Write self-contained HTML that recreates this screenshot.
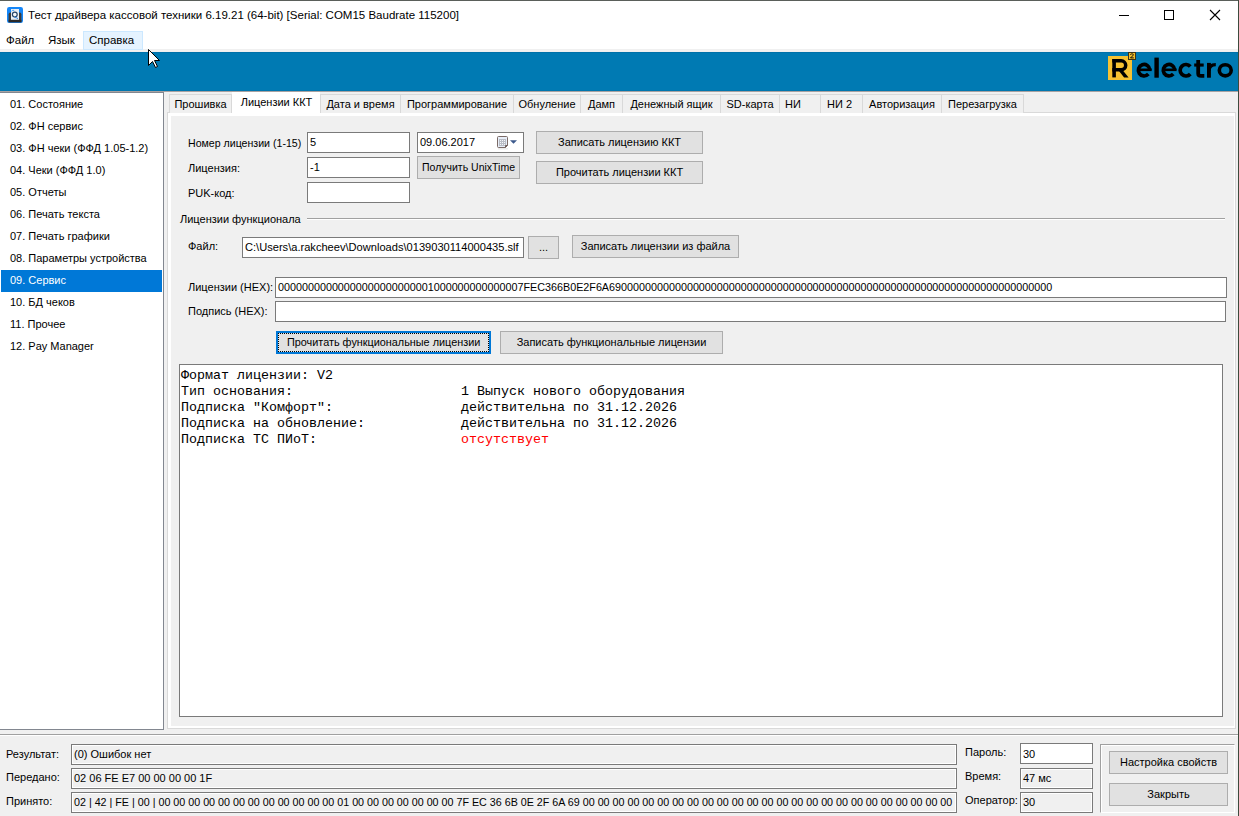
<!DOCTYPE html>
<html><head><meta charset="utf-8">
<style>
*{margin:0;padding:0;box-sizing:border-box}
html,body{width:1239px;height:816px;overflow:hidden;background:#F0F0F0;font-family:"Liberation Sans",sans-serif;font-size:11px;color:#000}
.a{position:absolute}
.t{position:absolute;white-space:pre;line-height:13px;margin-top:-1px}
.tb{position:absolute;background:#fff;border:1px solid #7A7A7A}
.ro{position:absolute;background:#F0F0F0;border:1px solid #7A7A7A;box-shadow:inset 0 0 0 1px #fff}
.btn{position:absolute;background:#E1E1E1;border:1px solid #ADADAD;white-space:pre;text-align:center}
.tab{position:absolute;background:#F0F0F0;border:1px solid #D9D9D9;border-bottom:none;white-space:pre}
.mono{position:absolute;font-family:"Liberation Mono",monospace;font-size:13.33px;line-height:16px;white-space:pre}
</style></head><body>
<div class="a" style="left:0px;top:0px;width:1239px;height:51px;background:#fff"></div>
<div class="a" style="left:0px;top:0px;width:1239px;height:1px;background:#5a5f5a"></div>
<svg class="a" style="left:7px;top:7px" width="16" height="16" viewBox="0 0 16 16">
<rect x="0" y="0" width="16" height="16" rx="2.2" fill="#1486F8"/>
<path d="M1.6 7.2Q1.6 5.6 3.2 5.6H12.8Q14.4 5.6 14.4 7.2V15.2H1.6Z" fill="#3c3c3c"/>
<rect x="4" y="2" width="8" height="11" fill="#E9EEF4"/>
<path d="M4.6 4.2Q5.6 2.8 7.2 3.4" fill="none" stroke="#4A9EF0" stroke-width="1"/>
<circle cx="7.8" cy="7.6" r="2.4" fill="#F4F7FA" stroke="#27466A" stroke-width="1.2"/>
<path d="M7.4 10.3Q9.4 10.6 11 11.6" fill="none" stroke="#2F86E6" stroke-width="1"/>
<rect x="1.6" y="12.8" width="12.8" height="2.4" fill="#2a2a2a"/>
</svg>
<div class="t" style="left:28px;top:9px;font-size:11.5px;line-height:15px">Тест драйвера кассовой техники 6.19.21 (64-bit) [Serial: COM15 Baudrate 115200]</div>
<div class="a" style="left:1119px;top:15px;width:10px;height:1px;background:#000"></div>
<div class="a" style="left:1164px;top:10px;width:10px;height:10px;border:1px solid #000"></div>
<svg class="a" style="left:1209px;top:9px" width="12" height="12" viewBox="0 0 12 12"><path d="M1 1L11 11M11 1L1 11" stroke="#000" stroke-width="1.1"/></svg>
<div class="a" style="left:0px;top:49px;width:1238px;height:1px;background:#F0F0F0"></div>
<div class="a" style="left:0px;top:50px;width:1238px;height:1px;background:#F3F2F0"></div>
<div class="a" style="left:83px;top:31px;width:60px;height:19px;background:#E5F3FF;border:1px solid #CCE8FF"></div>
<div class="t" style="left:6px;top:34px;font-size:11.5px;line-height:14px">Файл</div>
<div class="t" style="left:48px;top:34px;font-size:11.5px;line-height:14px">Язык</div>
<div class="t" style="left:89px;top:34px;font-size:11.5px;line-height:14px">Справка</div>
<div class="a" style="left:0px;top:52px;width:1238px;height:39px;background:#007AB3"></div>
<div class="a" style="left:0px;top:52px;width:1238px;height:1px;background:#0071A9"></div>
<div class="a" style="left:0px;top:90px;width:1238px;height:1px;background:#0076AE"></div>
<div class="a" style="left:0px;top:91px;width:1238px;height:1px;background:#A8A2A2"></div>
<svg class="a" style="left:1100px;top:50px" width="139" height="40" viewBox="1100 50 139 40"><rect x="1108" y="56" width="24" height="24" fill="#F7C232"/><path d="M1114.1 59V77.4" stroke="#000" stroke-width="3.6"/><path d="M1112.3 60.8H1121.2A4.5 4.5 0 0 1 1121.2 69.8H1112.3" fill="none" stroke="#000" stroke-width="3.5"/><path d="M1118.6 70.4H1122.9L1128.6 77.4H1124.1Z" fill="#000"/><rect x="1128.5" y="52.5" width="7" height="7" fill="#F2BE2A" stroke="#3a3218" stroke-width="1"/><path d="M1130.4 54.9C1130.4 53.5 1133.6 53.5 1133.4 55C1133.3 55.8 1131.4 56.5 1130.5 57.9H1133.8" fill="none" stroke="#111" stroke-width="1"/><path d="M1138.20 69.80H1151.70" stroke="#000" stroke-width="2.6"/><path d="M1149.85 69.85A5.75 5.75 0 1 0 1148.37 74.10" fill="none" stroke="#000" stroke-width="3.7"/><rect x="1154.4" y="57.6" width="4.4" height="20.1" fill="#000"/><path d="M1163.10 69.80H1176.60" stroke="#000" stroke-width="2.6"/><path d="M1174.75 69.85A5.75 5.75 0 1 0 1173.27 74.10" fill="none" stroke="#000" stroke-width="3.7"/><path d="M1190.30 66.55A5.75 5.75 0 1 0 1190.30 73.95" fill="none" stroke="#000" stroke-width="3.7"/><path d="M1198.2 60V73.4Q1198.2 75.9 1201 75.9H1204.3" fill="none" stroke="#000" stroke-width="3.8"/><rect x="1194.2" y="63.5" width="9.5" height="3.1" fill="#000"/><rect x="1207" y="62.9" width="3.9" height="14.8" fill="#000"/><path d="M1208.9 71Q1208.9 64.6 1215.8 64.6" fill="none" stroke="#000" stroke-width="3.4"/><ellipse cx="1225.25" cy="70.3" rx="5.95" ry="5.6" fill="none" stroke="#000" stroke-width="3.6"/></svg>
<div class="a" style="left:1238px;top:0px;width:1px;height:816px;background:#3d4b3d"></div>
<div class="a" style="left:-1px;top:92px;width:165px;height:638px;background:#fff;border:1px solid #828790"></div>
<div class="t" style="left:10px;top:99px;">01. Состояние</div>
<div class="t" style="left:10px;top:121px;">02. ФН сервис</div>
<div class="t" style="left:10px;top:143px;">03. ФН чеки (ФФД 1.05-1.2)</div>
<div class="t" style="left:10px;top:165px;">04. Чеки (ФФД 1.0)</div>
<div class="t" style="left:10px;top:187px;">05. Отчеты</div>
<div class="t" style="left:10px;top:209px;">06. Печать текста</div>
<div class="t" style="left:10px;top:231px;">07. Печать графики</div>
<div class="t" style="left:10px;top:253px;">08. Параметры устройства</div>
<div class="a" style="left:1px;top:270px;width:161px;height:22px;background:#0078D7"></div>
<div class="t" style="left:10px;top:275px;color:#fff">09. Сервис</div>
<div class="t" style="left:10px;top:297px;">10. БД чеков</div>
<div class="t" style="left:10px;top:319px;">11. Прочее</div>
<div class="t" style="left:10px;top:341px;">12. Pay Manager</div>
<div class="a" style="left:164px;top:92px;width:1074px;height:642px;background:#F0F0F0"></div>
<div class="a" style="left:167px;top:112px;width:1069px;height:617px;background:#fff;border:1px solid #D9D9D9"></div>
<div class="a" style="left:171px;top:116px;width:1063px;height:610px;background:#F0F0F0"></div>
<div class="tab" style="left:169px;top:94px;width:63px;height:19px"></div>
<div class="t" style="left:169px;top:99px;width:63px;text-align:center">Прошивка</div>
<div class="tab" style="left:320px;top:94px;width:81px;height:19px"></div>
<div class="t" style="left:320px;top:99px;width:81px;text-align:center">Дата и время</div>
<div class="tab" style="left:400px;top:94px;width:114px;height:19px"></div>
<div class="t" style="left:400px;top:99px;width:114px;text-align:center">Программирование</div>
<div class="tab" style="left:513px;top:94px;width:68px;height:19px"></div>
<div class="t" style="left:513px;top:99px;width:68px;text-align:center">Обнуление</div>
<div class="tab" style="left:580px;top:94px;width:43px;height:19px"></div>
<div class="t" style="left:580px;top:99px;width:43px;text-align:center">Дамп</div>
<div class="tab" style="left:622px;top:94px;width:99px;height:19px"></div>
<div class="t" style="left:622px;top:99px;width:99px;text-align:center">Денежный ящик</div>
<div class="tab" style="left:720px;top:94px;width:60px;height:19px"></div>
<div class="t" style="left:720px;top:99px;width:60px;text-align:center">SD-карта</div>
<div class="tab" style="left:779px;top:94px;width:42px;height:19px"></div>
<div class="t" style="left:785px;top:99px;">НИ</div>
<div class="tab" style="left:820px;top:94px;width:43px;height:19px"></div>
<div class="t" style="left:827px;top:99px;">НИ 2</div>
<div class="tab" style="left:862px;top:94px;width:80px;height:19px"></div>
<div class="t" style="left:862px;top:99px;width:80px;text-align:center">Авторизация</div>
<div class="tab" style="left:941px;top:94px;width:83px;height:19px"></div>
<div class="t" style="left:941px;top:99px;width:83px;text-align:center">Перезагрузка</div>
<div class="a" style="left:232px;top:92px;width:88px;height:22px;background:#fff"></div>
<div class="t" style="left:232px;top:97px;width:89px;text-align:center">Лицензии ККТ</div>
<div class="t" style="left:188px;top:138px;font-size:10.6px">Номер лицензии (1-15)</div>
<div class="t" style="left:188px;top:163px;">Лицензия:</div>
<div class="t" style="left:188px;top:188px;">PUK-код:</div>
<div class="a" style="left:307px;top:132px;width:103px;height:21px;background:#fff;border:1px solid #7A7A7A"></div>
<div class="t" style="left:310px;top:137px;">5</div>
<div class="a" style="left:307px;top:157px;width:103px;height:21px;background:#fff;border:1px solid #7A7A7A"></div>
<div class="t" style="left:310px;top:162px;">-1</div>
<div class="a" style="left:307px;top:182px;width:103px;height:21px;background:#fff;border:1px solid #7A7A7A"></div>
<div class="a" style="left:417px;top:132px;width:107px;height:21px;background:#fff;border:1px solid #7A7A7A"></div>
<div class="t" style="left:420px;top:137px;">09.06.2017</div>
<svg class="a" style="left:496px;top:135px" width="24" height="15" viewBox="0 0 24 15">
<rect x="2" y="13" width="10" height="1.5" fill="#000" opacity="0.08"/>
<path d="M2.5 1.5H10.5Q11.5 1.5 11.5 2.5V10.5L9.5 12.5H2.5Q1.5 12.5 1.5 11.5V2.5Q1.5 1.5 2.5 1.5Z" fill="#E8EEF8" stroke="#7A6A66" stroke-width="1"/>
<rect x="3" y="4" width="7" height="7" fill="#B9BDC6"/><rect x="4" y="5" width="1" height="1" fill="#F4F6FA"/><rect x="4" y="7" width="1" height="1" fill="#F4F6FA"/><rect x="4" y="9" width="1" height="1" fill="#F4F6FA"/><rect x="6" y="5" width="1" height="1" fill="#F4F6FA"/><rect x="6" y="7" width="1" height="1" fill="#F4F6FA"/><rect x="6" y="9" width="1" height="1" fill="#F4F6FA"/><rect x="8" y="5" width="1" height="1" fill="#F4F6FA"/><rect x="8" y="7" width="1" height="1" fill="#F4F6FA"/><rect x="8" y="9" width="1" height="1" fill="#F4F6FA"/>
<path d="M9.5 12.5V10.5H11.5" fill="none" stroke="#6A5A56" stroke-width="1"/>
<path d="M14 5.2h7l-3.5 3.6z" fill="#3C5A8C"/>
</svg>
<div class="btn" style="left:536px;top:131px;width:167px;height:23px;line-height:13px;padding-top:4px;">Записать лицензию ККТ</div>
<div class="btn" style="left:536px;top:161px;width:167px;height:23px;line-height:13px;padding-top:4px;">Прочитать лицензии ККТ</div>
<div class="btn" style="left:417px;top:156px;width:103px;height:23px;line-height:13px;padding-top:4px;font-size:10.5px">Получить UnixTime</div>
<div class="t" style="left:180px;top:214px;">Лицензии функционала</div>
<div class="a" style="left:307px;top:218px;width:918px;height:1px;background:#A0A0A0"></div>
<div class="a" style="left:307px;top:219px;width:918px;height:1px;background:#FFFFFF"></div>
<div class="t" style="left:188px;top:241px;">Файл:</div>
<div class="a" style="left:242px;top:237px;width:282px;height:21px;background:#fff;border:1px solid #7A7A7A"></div>
<div class="t" style="left:245px;top:242px;font-size:11.1px">C:\Users\a.rakcheev\Downloads\0139030114000435.slf</div>
<div class="btn" style="left:528px;top:236px;width:31px;height:23px;line-height:13px;padding-top:4px;">...</div>
<div class="btn" style="left:572px;top:235px;width:167px;height:23px;line-height:13px;padding-top:4px;">Записать лицензии из файла</div>
<div class="t" style="left:188px;top:282px;">Лицензии (HEX):</div>
<div class="t" style="left:188px;top:306px;">Подпись (HEX):</div>
<div class="a" style="left:275px;top:277px;width:952px;height:21px;background:#fff;border:1px solid #7A7A7A"></div>
<div class="t" style="left:278px;top:282px;font-size:10.77px">00000000000000000000000001000000000000007FEC366B0E2F6A69000000000000000000000000000000000000000000000000000000000000000000000000</div>
<div class="a" style="left:275px;top:301px;width:951px;height:21px;background:#fff;border:1px solid #7A7A7A"></div>
<div class="a" style="left:276px;top:331px;width:215px;height:23px;background:#E1E1E1;border:2px solid #0078D7"></div>
<div class="a" style="left:278px;top:333px;width:211px;height:1px;background:repeating-linear-gradient(90deg,#000 0 1px,transparent 1px 2px)"></div>
<div class="a" style="left:278px;top:351px;width:211px;height:1px;background:repeating-linear-gradient(90deg,#000 0 1px,transparent 1px 2px)"></div>
<div class="a" style="left:278px;top:333px;width:1px;height:19px;background:repeating-linear-gradient(180deg,#000 0 1px,transparent 1px 2px)"></div>
<div class="a" style="left:488px;top:333px;width:1px;height:19px;background:repeating-linear-gradient(180deg,#000 0 1px,transparent 1px 2px)"></div>
<div class="t" style="left:287px;top:337px;font-size:10.85px">Прочитать функциональные лицензии</div>
<div class="btn" style="left:500px;top:331px;width:223px;height:23px;line-height:13px;padding-top:4px;">Записать функциональные лицензии</div>
<div class="a" style="left:179px;top:364px;width:1044px;height:353px;background:#fff;border:1px solid #7A7A7A"></div>
<div class="mono" style="left:181px;top:368px">Формат лицензии: V2</div>
<div class="mono" style="left:181px;top:384px">Тип основания:                     1 Выпуск нового оборудования</div>
<div class="mono" style="left:181px;top:400px">Подписка &quot;Комфорт&quot;:                действительна по 31.12.2026</div>
<div class="mono" style="left:181px;top:416px">Подписка на обновление:            действительна по 31.12.2026</div>
<div class="mono" style="left:181px;top:432px">Подписка ТС ПИоТ:                  <span style="color:#FF0000">отсутствует</span></div>
<div class="a" style="left:0px;top:734px;width:1238px;height:1px;background:#A0A0A0"></div>
<div class="a" style="left:0px;top:735px;width:1238px;height:1px;background:#FFFFFF"></div>
<div class="t" style="left:6px;top:749px;">Результат:</div>
<div class="t" style="left:6px;top:772px;">Передано:</div>
<div class="t" style="left:6px;top:796px;">Принято:</div>
<div class="a" style="left:71px;top:744px;width:886px;height:21px;background:#F0F0F0;border:1px solid #7A7A7A;box-shadow:inset 0 0 0 1px #fff"></div>
<div class="a" style="left:71px;top:768px;width:886px;height:21px;background:#F0F0F0;border:1px solid #7A7A7A;box-shadow:inset 0 0 0 1px #fff"></div>
<div class="a" style="left:71px;top:792px;width:886px;height:21px;background:#F0F0F0;border:1px solid #7A7A7A;box-shadow:inset 0 0 0 1px #fff"></div>
<div class="t" style="left:74px;top:749px;">(0) Ошибок нет</div>
<div class="t" style="left:74px;top:773px;">02 06 FE E7 00 00 00 00 1F</div>
<div class="a" style="left:72px;top:793px;width:882px;height:19px;overflow:hidden">
<div class="t" style="left:2px;top:4px;font-size:10.72px">02 | 42 | FE | 00 | 00 00 00 00 00 00 00 00 00 00 00 00 01 00 00 00 00 00 00 00 7F EC 36 6B 0E 2F 6A 69 00 00 00 00 00 00 00 00 00 00 00 00 00 00 00 00 00 00 00 00 00 00 00 00 00 00 00 00 00 00 00 00 00 00 00 00 00</div>
</div>
<div class="t" style="left:965px;top:747px;">Пароль:</div>
<div class="t" style="left:965px;top:771px;">Время:</div>
<div class="t" style="left:965px;top:795px;">Оператор:</div>
<div class="a" style="left:1020px;top:743px;width:73px;height:21px;background:#fff;border:1px solid #7A7A7A"></div>
<div class="a" style="left:1020px;top:768px;width:73px;height:21px;background:#F0F0F0;border:1px solid #7A7A7A;box-shadow:inset 0 0 0 1px #fff"></div>
<div class="a" style="left:1020px;top:792px;width:73px;height:21px;background:#F0F0F0;border:1px solid #7A7A7A;box-shadow:inset 0 0 0 1px #fff"></div>
<div class="t" style="left:1023px;top:749px;">30</div>
<div class="t" style="left:1023px;top:773px;">47 мс</div>
<div class="t" style="left:1023px;top:797px;">30</div>
<div class="a" style="left:1100px;top:744px;width:135px;height:69px;border-top:1px solid #A0A0A0;border-left:1px solid #A0A0A0;border-right:1px solid #fff;border-bottom:1px solid #fff"></div>
<div class="a" style="left:1101px;top:745px;width:133px;height:1px;background:#fff"></div>
<div class="a" style="left:1101px;top:745px;width:1px;height:67px;background:#fff"></div>
<div class="btn" style="left:1109px;top:751px;width:119px;height:23px;line-height:13px;padding-top:4px;">Настройка свойств</div>
<div class="btn" style="left:1109px;top:783px;width:119px;height:23px;line-height:13px;padding-top:4px;">Закрыть</div>
<svg class="a" style="left:148px;top:49px" width="14" height="21" viewBox="0 0 14 21"><path d="M0.5 0.5V16.5L4.5 12.5L7.5 18.5L9.5 17.5L6.5 11.5H11.5Z" fill="#fff" stroke="#000" stroke-width="1" stroke-linejoin="miter"/></svg>
</body></html>
